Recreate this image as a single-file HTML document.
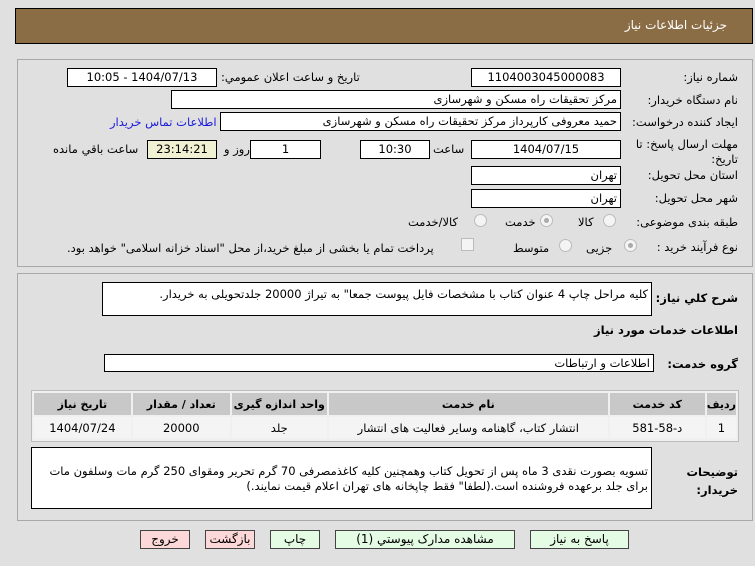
<!DOCTYPE html>
<html><head><meta charset="utf-8"><style>
*{margin:0;padding:0;box-sizing:border-box}
body{width:755px;height:566px;background:#e0e0e0;font-family:"DejaVu Sans","Liberation Sans",sans-serif;font-size:11.5px;color:#000;position:relative;overflow:hidden}
.a{position:absolute;white-space:nowrap}
.box{position:absolute;background:#fff;border:1px solid #000;height:19px;line-height:17px;direction:rtl;padding:0 3px;white-space:nowrap;overflow:hidden}
.c{text-align:center}
.l{direction:rtl;text-align:right}
.b{font-weight:bold}
.rad{position:absolute;width:13px;height:13px;border-radius:50%;border:1px solid #bbb;background:#f4f4f4}
.rad.on::after{content:"";position:absolute;left:3px;top:3px;width:5px;height:5px;border-radius:50%;background:#aaa}
.btn{position:absolute;height:19px;border:1px solid #444;line-height:17px;text-align:center;font-size:12px;background:#e4fbe4}
.red{background:#fdd8d8}
table{border-collapse:separate;border-spacing:2px}
td{background:#f4f4f4;text-align:center;height:21px;font-size:11.5px}
th{background:#c8c8c8;height:22px;font-size:11px}
</style></head><body>
<div class="a" style="left:15px;top:8px;width:738px;height:36px;background:#8b6d45;border:1px solid #000"></div>
<div class="a" style="right:28px;top:18px;color:#fff;font-size:12px">جزئیات اطلاعات نیاز</div>

<div class="a" style="left:17px;top:59px;width:736px;height:208px;border:1px solid #a8a8a8"></div>
<div class="a l" style="right:17px;top:70px">شماره نیاز:</div>
<div class="box c" style="left:471px;top:68px;width:150px">1104003045000083</div>
<div class="a l" style="left:221px;top:70px">تاريخ و ساعت اعلان عمومي:</div>
<div class="box c" style="left:67px;top:68px;width:150px">1404/07/13 - 10:05</div>

<div class="a l" style="right:17px;top:93px">نام دستگاه خریدار:</div>
<div class="box" style="left:171px;top:90px;width:450px">مرکز تحقیقات راه  مسکن و شهرسازی</div>

<div class="a l" style="right:17px;top:115px">ایجاد کننده درخواست:</div>
<div class="box" style="left:220px;top:112px;width:401px">حمید معروفی کارپرداز مرکز تحقیقات راه  مسکن و شهرسازی</div>
<div class="a" style="left:110px;top:115px;color:#1a1adb">اطلاعات تماس خریدار</div>

<div class="a l" style="right:17px;top:137px">مهلت ارسال پاسخ: تا</div>
<div class="a l" style="right:17px;top:152px">تاریخ:</div>
<div class="box c" style="left:471px;top:140px;width:150px">1404/07/15</div>
<div class="a" style="left:433px;top:142px">ساعت</div>
<div class="box c" style="left:360px;top:140px;width:70px">10:30</div>
<div class="box c" style="left:250px;top:140px;width:71px">1</div>
<div class="a" style="left:224px;top:142px">روز و</div>
<div class="box c" style="left:147px;top:140px;width:70px;background:#f0f0d2">23:14:21</div>
<div class="a" style="left:53px;top:142px">ساعت باقي مانده</div>

<div class="a l" style="right:17px;top:168px">استان محل تحویل:</div>
<div class="box" style="left:471px;top:166px;width:150px">تهران</div>
<div class="a l" style="right:17px;top:191px">شهر محل تحویل:</div>
<div class="box" style="left:471px;top:189px;width:150px">تهران</div>

<div class="a l" style="right:17px;top:215px">طبقه بندی موضوعی:</div>
<div class="rad" style="left:603px;top:214px"></div><div class="a" style="left:578px;top:215px">کالا</div>
<div class="rad on" style="left:540px;top:214px"></div><div class="a" style="left:505px;top:215px">خدمت</div>
<div class="rad" style="left:474px;top:214px"></div><div class="a" style="left:408px;top:215px">کالا/خدمت</div>

<div class="a l" style="right:17px;top:240px">نوع فرآیند خرید :</div>
<div class="rad on" style="left:624px;top:239px"></div><div class="a" style="left:586px;top:241px">جزیی</div>
<div class="rad" style="left:559px;top:239px"></div><div class="a" style="left:513px;top:241px">متوسط</div>
<div class="a" style="left:461px;top:238px;width:13px;height:13px;border:1px solid #bbb;background:#f4f4f4"></div>
<div class="a" dir="rtl" style="left:67px;top:241px">پرداخت تمام یا بخشی از مبلغ خرید،از محل "اسناد خزانه اسلامی" خواهد بود.</div>

<div class="a" style="left:17px;top:273px;width:736px;height:248px;border:1px solid #a8a8a8"></div>
<div class="a b l" style="right:17px;top:291px">شرح کلي نياز:</div>
<div class="box" style="left:102px;top:282px;width:550px;height:34px;line-height:22px">کلیه مراحل چاپ 4 عنوان کتاب با مشخصات فایل پیوست جمعا" به تیراژ 20000 جلدتحویلی به خریدار.</div>
<div class="a b l" style="right:17px;top:323px">اطلاعات خدمات مورد نياز</div>
<div class="a b l" style="right:17px;top:357px">گروه خدمت:</div>
<div class="box" style="left:104px;top:354px;width:550px;height:18px;line-height:17px">اطلاعات و ارتباطات</div>

<div class="a" style="left:31px;top:390px;width:708px;height:52px;border:1px solid #bbb;background:#f0f0f0">
<table dir="rtl" style="width:706px">
<tr><th style="width:28px">ردیف</th><th style="width:95px">کد خدمت</th><th style="width:279px">نام خدمت</th><th style="width:95px">واحد اندازه گیری</th><th style="width:97px">تعداد / مقدار</th><th>تاریخ نیاز</th></tr>
<tr><td>1</td><td>د-58-581</td><td>انتشار کتاب، گاهنامه وسایر فعالیت های انتشار</td><td>جلد</td><td>20000</td><td>1404/07/24</td></tr>
</table></div>

<div class="a b l" style="right:17px;top:463px;line-height:18px">توضیحات<br>خریدار:</div>
<div class="box" style="left:31px;top:447px;width:621px;height:62px;line-height:15px;white-space:normal;padding-top:16px">تسویه بصورت نقدی  3 ماه  پس از تحویل کتاب وهمچنین کلیه کاغذمصرفی 70 گرم تحریر ومقوای 250 گرم مات وسلفون مات برای جلد برعهده فروشنده است.(لطفا" فقط چاپخانه های تهران اعلام قیمت نمایند.)</div>

<div class="btn" style="left:530px;top:530px;width:99px">پاسخ به نیاز</div>
<div class="btn" style="left:335px;top:530px;width:180px">مشاهده مدارک پیوستي (1)</div>
<div class="btn" style="left:270px;top:530px;width:50px">چاپ</div>
<div class="btn red" style="left:205px;top:530px;width:50px">بازگشت</div>
<div class="btn red" style="left:140px;top:530px;width:50px">خروج</div>
</body></html>
